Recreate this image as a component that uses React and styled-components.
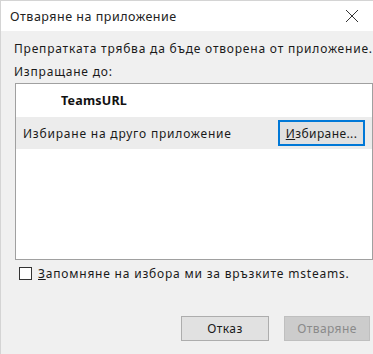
import React from 'react';
import styled, { createGlobalStyle } from 'styled-components';

const Global = createGlobalStyle`
  html, body {
    margin: 0;
    padding: 0;
    background: #f0f0f0;
  }
  * {
    box-sizing: border-box;
  }
`;

const Dialog = styled.div`
  width: 373px;
  height: 354px;
  background: #f0f0f0;
  border-left: 1px solid #d4d4d4;
  border-top: 1px solid #d4d4d4;
  font-family: 'Noto Sans', 'Open Sans', sans-serif;
  font-size: 12px;
  letter-spacing: 0.8px;
  color: #1a1a1a;
  display: flex;
  flex-direction: column;
  overflow: hidden;
`;

const TitleBar = styled.div`
  height: 30px;
  background: #fff;
  display: flex;
  align-items: center;
  justify-content: space-between;
  padding: 0 14px 0 9px;
  font-size: 12.5px;
  letter-spacing: 0.5px;
  color: #222;
`;

const Body = styled.div`
  flex: 1;
  display: flex;
  flex-direction: column;
  padding: 9px 0 0 13px;
`;

const Line = styled.div`
  height: 18px;
  line-height: 18px;
  margin-bottom: ${p => p.$after || 0}px;
  white-space: nowrap;
`;

const ListBox = styled.div`
  margin: 2px 0 0 1px;
  width: 358px;
  height: 177px;
  background: #fff;
  border: 1px solid #a0a0a0;
  display: flex;
  flex-direction: column;
`;

const AppRow = styled.div`
  height: 33px;
  display: flex;
  align-items: center;
  padding-left: 45px;
  font-weight: 700;
  font-size: 12.5px;
  letter-spacing: 0.2px;
  color: #111;
`;

const ChooseRow = styled.div`
  height: 32px;
  display: flex;
  align-items: center;
  justify-content: space-between;
  padding: 0 7px 0 7px;
  background: #ececec;
`;

const Button = styled.button`
  font-family: inherit;
  font-size: 12px;
  height: ${p => p.$h || 25}px;
  width: ${p => p.$w}px;
  padding: 0;
  background: ${p => (p.$disabled ? '#cccccc' : '#e1e1e1')};
  color: ${p => (p.$disabled ? '#8a8a8a' : '#1a1a1a')};
  border: ${p => (p.$focused ? '2px solid #0078d7' : p.$disabled ? '1px solid #bfbfbf' : '1px solid #adadad')};
  letter-spacing: 0.4px;
  display: flex;
  align-items: center;
  justify-content: center;
`;

const CheckRow = styled.label`
  display: flex;
  align-items: center;
  gap: 6px;
  margin: 6px 0 0 5px;
  height: 15px;
  white-space: nowrap;
`;

const Box = styled.span`
  width: 13px;
  height: 13px;
  border: 1px solid #333;
  background: #fff;
`;

const Footer = styled.div`
  display: flex;
  justify-content: flex-end;
  gap: 15px;
  margin-top: 35px;
  padding-right: 3px;
`;

function Close() {
  return (
    <svg width="14" height="14" viewBox="0 0 14 14">
      <path d="M1 1 L13 13 M13 1 L1 13" stroke="#333" strokeWidth="1" />
    </svg>
  );
}

export default function App() {
  return (
    <>
      <Global />
      <Dialog>
        <TitleBar>
          <span>Отваряне на приложение</span>
          <Close />
        </TitleBar>
        <Body>
          <Line $after={5}>Препратката трябва да бъде отворена от приложение.</Line>
          <Line>Изпращане до:</Line>
          <ListBox>
            <AppRow>TeamsURL</AppRow>
            <ChooseRow>
              <span>Избиране на друго приложение</span>
              <Button $w={87} $h={26} $focused>
                <u>И</u>збиране...
              </Button>
            </ChooseRow>
          </ListBox>
          <CheckRow>
            <Box />
            <span>
              <u>З</u>апомняне на избора ми за връзките msteams.
            </span>
          </CheckRow>
          <Footer>
            <Button $w={88}>Отказ</Button>
            <Button $w={86} $disabled>Отваряне</Button>
          </Footer>
        </Body>
      </Dialog>
    </>
  );
}
